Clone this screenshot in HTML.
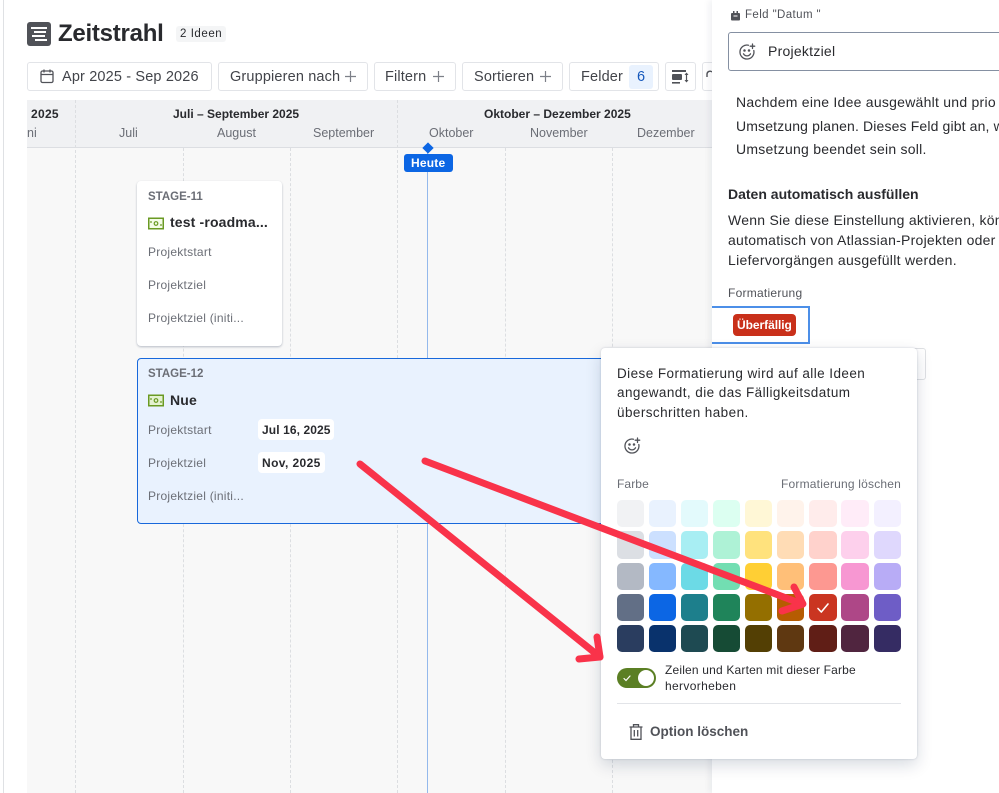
<!DOCTYPE html>
<html lang="de"><head><meta charset="utf-8"><title>Zeitstrahl</title>
<style>
html,body{margin:0;padding:0;background:#fff}
#p{position:relative;width:999px;height:793px;overflow:hidden;background:#fff;font-family:"Liberation Sans","DejaVu Sans",sans-serif;color:#292a2e;filter:blur(.35px)}
#p div,#p span.a,#p svg{position:absolute}
.t{position:absolute;white-space:nowrap;line-height:20px;height:20px;font-size:13px;letter-spacing:.35px}
.btn{position:absolute;top:62px;height:29px;box-sizing:border-box;border:1px solid #e2e4e8;border-radius:3px;background:#fff}
.d{width:0;border-left:1px dashed #dcdee1}
.m{color:#6b6e76;font-size:12.5px;top:123px;letter-spacing:0}
.q{font-weight:bold;font-size:12px;top:104px;color:#292a2e;letter-spacing:0}
.lab{color:#6b6e76;font-size:12px;letter-spacing:.25px}
.key{color:#6b6e76;font-weight:bold;font-size:11.5px;letter-spacing:0}
.title{font-weight:bold;font-size:14px;letter-spacing:.15px}
.pill{background:#fff;border-radius:4px;height:21px}
.bt{font-size:14.5px;color:#42444a;letter-spacing:.15px;top:67px}
.pt{font-size:14px;letter-spacing:.25px;color:#292a2e}
.pp{font-size:13.5px;letter-spacing:.43px;color:#292a2e}
.s{width:27.3px;height:27.3px;border-radius:5px}
</style></head><body><div id="p">
<div style="left:3px;top:0;width:1px;height:793px;background:#dfe1e4"></div>
<div style="left:27px;top:22px;width:24px;height:24px;background:#505258;border-radius:3px"></div>
<div style="left:31px;top:27px;width:16px;height:2px;background:#fff"></div>
<div style="left:34px;top:31px;width:12px;height:2px;background:#fff"></div>
<div style="left:32px;top:35px;width:13px;height:2px;background:#fff"></div>
<div style="left:35px;top:39px;width:12px;height:2px;background:#fff"></div>
<span class="t" style="left:58px;top:24px;font-size:24px;font-weight:bold;letter-spacing:-.25px">Zeitstrahl</span>
<div style="left:176px;top:26px;width:50px;height:16px;background:#f4f5f6;border-radius:3px"></div>
<span class="t" style="left:180px;top:24px;font-size:11.5px;letter-spacing:.55px">2 Ideen</span>

<div class="btn" style="left:27px;width:185px"></div>
<svg style="left:39px;top:68px" width="16" height="16" viewBox="0 0 16 16" fill="none" stroke="#505258" stroke-width="1.3"><rect x="2" y="3" width="12" height="11.5" rx="1.5"/><path d="M2 6.5h12M5 1.5v3M11 1.5v3"/></svg>
<span class="t bt" style="left:62px">Apr 2025 - Sep 2026</span>
<div class="btn" style="left:218px;width:150px"></div>
<span class="t bt" style="left:230px">Gruppieren nach</span>
<svg style="left:344px;top:70px" width="13" height="13" viewBox="0 0 13 13" stroke="#7d8088" stroke-width="1.2"><path d="M6.5 1v11M1 6.5h11"/></svg>
<div class="btn" style="left:374px;width:82px"></div>
<span class="t bt" style="left:385px">Filtern</span>
<svg style="left:432px;top:70px" width="13" height="13" viewBox="0 0 13 13" stroke="#7d8088" stroke-width="1.2"><path d="M6.5 1v11M1 6.5h11"/></svg>
<div class="btn" style="left:462px;width:101px"></div>
<span class="t bt" style="left:474px">Sortieren</span>
<svg style="left:539px;top:70px" width="13" height="13" viewBox="0 0 13 13" stroke="#7d8088" stroke-width="1.2"><path d="M6.5 1v11M1 6.5h11"/></svg>
<div class="btn" style="left:569px;width:90px"></div>
<span class="t bt" style="left:581px">Felder</span>
<div style="left:629px;top:65px;width:24px;height:24px;background:#e9f2fe;border-radius:3px"></div>
<span class="t bt" style="left:637px;color:#1558bc">6</span>
<div class="btn" style="left:665px;width:31px"></div>
<svg style="left:671px;top:69px" width="20" height="16" viewBox="0 0 20 16" fill="#505258"><rect x="1" y="1" width="14" height="2"/><rect x="1" y="5" width="10" height="6" rx="1"/><rect x="1" y="13" width="8" height="1.6"/><path d="M15.5 4v9" stroke="#505258" stroke-width="1.2"/><path d="M13.5 6l2-2.500 2 2.500zM13.500 11l2 2.500 2-2.500z"/></svg>
<div class="btn" style="left:702px;width:30px"></div>
<svg style="left:706px;top:70px" width="8" height="10" viewBox="0 0 8 10" fill="none" stroke="#505258" stroke-width="1.4"><path d="M1 7V4a3 3 0 0 1 5-2"/></svg>

<div style="left:27px;top:100px;width:685px;height:48px;background:#f0f1f3;border-bottom:1px solid #dcdee2;box-sizing:border-box"></div>
<div style="left:27px;top:148px;width:685px;height:645px;background:#f8f8f8"></div>
<div class="d" style="left:75px;top:100px;height:693px"></div>
<div class="d" style="left:397px;top:100px;height:693px"></div>
<div class="d" style="left:183px;top:148px;height:645px"></div>
<div class="d" style="left:290px;top:148px;height:645px"></div>
<div class="d" style="left:505px;top:148px;height:645px"></div>
<div class="d" style="left:612px;top:148px;height:645px"></div>

<span class="t q" style="left:31px;letter-spacing:.3px">2025</span>
<span class="t q" style="left:173px">Juli – September 2025</span>
<span class="t q" style="left:484px">Oktober – Dezember 2025</span>
<span class="t m" style="left:27px">ni</span>
<span class="t m" style="left:119px">Juli</span>
<span class="t m" style="left:217px">August</span>
<span class="t m" style="left:313px">September</span>
<span class="t m" style="left:429px">Oktober</span>
<span class="t m" style="left:530px">November</span>
<span class="t m" style="left:637px">Dezember</span>

<div style="left:427px;top:148px;width:1px;height:645px;background:#94b9ec"></div>
<div style="left:423.500px;top:144px;width:8px;height:8px;background:#0c66e4;transform:rotate(45deg)"></div>
<div style="left:404px;top:154px;width:49px;height:18px;background:#0c66e4;border-radius:3px"></div>
<span class="t" style="left:411px;top:153px;color:#fff;font-weight:bold;font-size:12px;letter-spacing:.2px">Heute</span>

<div style="left:137px;top:181px;width:145px;height:165px;background:#fff;border-radius:4px;box-shadow:0 1px 2px rgba(9,30,66,.28)"></div>
<span class="t key" style="left:148px;top:187px">STAGE-11</span>
<svg style="left:148px;top:217px" width="16" height="13" viewBox="0 0 16 13" fill="none"><rect x=".75" y="1.250" width="14.500" height="10.500" fill="#f4fbe8" stroke="#6a9a23" stroke-width="1.500"/><circle cx="8" cy="6.500" r="1.800" stroke="#6a9a23" stroke-width="1.200"/><path d="M3 4v2M13 7v2" stroke="#6a9a23" stroke-width="1.200"/></svg>
<span class="t title" style="left:170px;top:212px">test -roadma...</span>
<span class="t lab" style="left:148px;top:242px">Projektstart</span>
<span class="t lab" style="left:148px;top:275px">Projektziel</span>
<span class="t lab" style="left:148px;top:308px">Projektziel (initi...</span>

<div style="left:137px;top:358px;width:480px;height:166px;box-sizing:border-box;background:#e9f2fe;border:1.500px solid #1868db;border-radius:4px"></div>
<span class="t key" style="left:148px;top:364px">STAGE-12</span>
<svg style="left:148px;top:394px" width="16" height="13" viewBox="0 0 16 13" fill="none"><rect x=".75" y="1.250" width="14.500" height="10.500" fill="#e4f2d0" stroke="#6a9a23" stroke-width="1.500"/><circle cx="8" cy="6.500" r="1.800" stroke="#6a9a23" stroke-width="1.200"/><path d="M3 4v2M13 7v2" stroke="#6a9a23" stroke-width="1.200"/></svg>
<span class="t title" style="left:170px;top:390px">Nue</span>
<span class="t lab" style="left:148px;top:420px">Projektstart</span>
<span class="t lab" style="left:148px;top:453px">Projektziel</span>
<span class="t lab" style="left:148px;top:486px">Projektziel (initi...</span>
<div class="pill" style="left:258px;top:419px;width:76px"></div>
<span class="t" style="left:262px;top:420px;font-weight:bold;font-size:12px;letter-spacing:.1px">Jul 16, 2025</span>
<div class="pill" style="left:258px;top:452px;width:67px"></div>
<span class="t" style="left:262px;top:453px;font-weight:bold;font-size:12px;letter-spacing:.4px">Nov, 2025</span>

<!-- right panel -->
<div style="left:712px;top:0;width:287px;height:793px;background:#fff;box-shadow:-3px 0 6px rgba(9,30,66,.06);overflow:hidden"></div>
<svg style="left:730px;top:10px" width="11" height="11" viewBox="0 0 11 11" fill="#505258"><rect x="1" y="3" width="9" height="7.500" rx="1"/><rect x="3" y="1" width="1.500" height="3"/><rect x="6.500" y="1" width="1.500" height="3"/><rect x="3.500" y="5.500" width="4" height="1" fill="#fff"/></svg>
<span class="t" style="left:745px;top:5px;font-size:11.500px;color:#505258;letter-spacing:.4px">Feld "Datum "</span>
<div style="left:728px;top:32px;width:290px;height:39px;box-sizing:border-box;border:1px solid #8590a2;border-radius:3px;background:#fff"></div>
<svg style="left:738px;top:43px" width="18" height="18" viewBox="0 0 18 18" fill="none" stroke="#505258" stroke-width="1.300" stroke-linecap="round"><path d="M10.500 2.200A7 7 0 1 0 15.800 7.500"/><path d="M5.500 10.800a4 4 0 0 0 7 0"/><path d="M14.500 1v4.500M12.200 3.200h4.500"/><circle cx="6.500" cy="7.500" r=".6" fill="#505258"/><circle cx="11" cy="7.500" r=".6" fill="#505258"/></svg>
<span class="t pt" style="left:768px;top:41px">Projektziel</span>
<span class="t pt" style="left:736px;top:92px">Nachdem eine Idee ausgewählt und prio</span>
<span class="t pt" style="left:736px;top:116px;letter-spacing:.14px">Umsetzung planen. Dieses Feld gibt an, w</span>
<span class="t pt" style="left:736px;top:139px">Umsetzung beendet sein soll.</span>
<span class="t pt" style="left:728px;top:184px;font-weight:bold;letter-spacing:0">Daten automatisch ausfüllen</span>
<span class="t pt" style="left:728px;top:210px">Wenn Sie diese Einstellung aktivieren, kön</span>
<span class="t pt" style="left:728px;top:230px">automatisch von Atlassian-Projekten oder</span>
<span class="t pt" style="left:728px;top:250px;letter-spacing:.3px">Liefervorgängen ausgefüllt werden.</span>
<span class="t" style="left:728px;top:283px;font-size:12px;color:#505258;letter-spacing:.25px">Formatierung</span>
<div style="left:712px;top:306px;width:98px;height:38px;box-sizing:border-box;border:2px solid #4c8fe8;border-left:none"></div>
<div style="left:733px;top:314px;width:63px;height:22px;background:#c9301a;border-radius:4px"></div>
<span class="t" style="left:737px;top:315px;color:#fff;font-weight:bold;font-size:12px;letter-spacing:-.05px">Überfällig</span>
<div style="left:880px;top:348px;width:46px;height:32px;box-sizing:border-box;border:1px solid #dfe1e4;border-radius:3px;background:#fff"></div>

<!-- popup -->
<div style="left:601px;top:348px;width:316px;height:411px;background:#fff;border-radius:4px;box-shadow:0 6px 16px rgba(9,30,66,.16),0 0 2px rgba(9,30,66,.18)"></div>
<span class="t pp" style="left:617px;top:364px">Diese Formatierung wird auf alle Ideen</span>
<span class="t pp" style="left:617px;top:383px">angewandt, die das Fälligkeitsdatum</span>
<span class="t pp" style="left:617px;top:403px">überschritten haben.</span>
<svg style="left:623px;top:437px" width="18" height="18" viewBox="0 0 18 18" fill="none" stroke="#505258" stroke-width="1.300" stroke-linecap="round"><path d="M10.500 2.200A7 7 0 1 0 15.800 7.500"/><path d="M5.500 10.800a4 4 0 0 0 7 0"/><path d="M14.500 1v4.500M12.200 3.200h4.500"/><circle cx="6.500" cy="7.500" r=".6" fill="#505258"/><circle cx="11" cy="7.500" r=".6" fill="#505258"/></svg>
<span class="t" style="left:617px;top:474px;font-size:12px;color:#6b6e76;letter-spacing:.1px">Farbe</span>
<span class="t" style="left:781px;top:474px;font-size:12px;color:#6b6e76;letter-spacing:.2px">Formatierung löschen</span>

<div class="s" style="left:616.700px;top:500px;background:#f1f2f4"></div><div class="s" style="left:648.800px;top:500px;background:#e9f2fe"></div><div class="s" style="left:680.900px;top:500px;background:#e3fafc"></div><div class="s" style="left:713px;top:500px;background:#dcfff1"></div><div class="s" style="left:745.100px;top:500px;background:#fff7d6"></div><div class="s" style="left:777.200px;top:500px;background:#fff3eb"></div><div class="s" style="left:809.300px;top:500px;background:#ffeceb"></div><div class="s" style="left:841.400px;top:500px;background:#ffecf8"></div><div class="s" style="left:873.500px;top:500px;background:#f3f0ff"></div>
<div class="s" style="left:616.700px;top:531.300px;background:#dcdfe4"></div><div class="s" style="left:648.800px;top:531.300px;background:#cce0ff"></div><div class="s" style="left:680.900px;top:531.300px;background:#a8eef3"></div><div class="s" style="left:713px;top:531.300px;background:#aef2d6"></div><div class="s" style="left:745.100px;top:531.300px;background:#ffe27d"></div><div class="s" style="left:777.200px;top:531.300px;background:#ffdcb5"></div><div class="s" style="left:809.300px;top:531.300px;background:#ffd2cc"></div><div class="s" style="left:841.400px;top:531.300px;background:#fdd0ec"></div><div class="s" style="left:873.500px;top:531.300px;background:#dfd8fd"></div>
<div class="s" style="left:616.700px;top:562.600px;background:#b3b9c4"></div><div class="s" style="left:648.800px;top:562.600px;background:#85b8ff"></div><div class="s" style="left:680.900px;top:562.600px;background:#6cdae6"></div><div class="s" style="left:713px;top:562.600px;background:#72deb2"></div><div class="s" style="left:745.100px;top:562.600px;background:#ffcf34"></div><div class="s" style="left:777.200px;top:562.600px;background:#ffbf78"></div><div class="s" style="left:809.300px;top:562.600px;background:#fd9891"></div><div class="s" style="left:841.400px;top:562.600px;background:#f797d2"></div><div class="s" style="left:873.500px;top:562.600px;background:#b8acf6"></div>
<div class="s" style="left:616.700px;top:593.900px;background:#626f86"></div><div class="s" style="left:648.800px;top:593.900px;background:#0c66e4"></div><div class="s" style="left:680.900px;top:593.900px;background:#1d7f8c"></div><div class="s" style="left:713px;top:593.900px;background:#1f845a"></div><div class="s" style="left:745.100px;top:593.900px;background:#946f00"></div><div class="s" style="left:777.200px;top:593.900px;background:#b65c02"></div><div class="s" style="left:809.300px;top:593.900px;background:#ca3521"></div><div class="s" style="left:841.400px;top:593.900px;background:#ae4787"></div><div class="s" style="left:873.500px;top:593.900px;background:#6e5dc6"></div>
<div class="s" style="left:616.700px;top:625.200px;background:#2a3d5f"></div><div class="s" style="left:648.800px;top:625.200px;background:#09326c"></div><div class="s" style="left:680.900px;top:625.200px;background:#1e4a52"></div><div class="s" style="left:713px;top:625.200px;background:#164b35"></div><div class="s" style="left:745.100px;top:625.200px;background:#533f04"></div><div class="s" style="left:777.200px;top:625.200px;background:#5f3811"></div><div class="s" style="left:809.300px;top:625.200px;background:#601e16"></div><div class="s" style="left:841.400px;top:625.200px;background:#50253f"></div><div class="s" style="left:873.500px;top:625.200px;background:#352c63"></div>
<svg style="left:815px;top:600px" width="16" height="16" viewBox="0 0 16 16" fill="none" stroke="#fff" stroke-width="1.600" stroke-linecap="round" stroke-linejoin="round"><path d="M3 8.500l3.300 3.500L13 4"/></svg>

<div style="left:617px;top:668px;width:39px;height:20px;background:#5b7f24;border-radius:10px"></div>
<div style="left:638px;top:670px;width:16px;height:16px;background:#fff;border-radius:50%"></div>
<svg style="left:622px;top:673px" width="10" height="10" viewBox="0 0 10 10" fill="none" stroke="#fff" stroke-width="1.200" stroke-linecap="round"><path d="M2 5.500l2 2L8 3"/></svg>
<span class="t" style="left:665px;top:660px;font-size:12px;letter-spacing:.18px">Zeilen und Karten mit dieser Farbe</span>
<span class="t" style="left:665px;top:676px;font-size:12px;letter-spacing:.35px">hervorheben</span>
<div style="left:617px;top:703px;width:284px;height:1px;background:#e2e4e8"></div>
<svg style="left:628px;top:723px" width="16" height="18" viewBox="0 0 16 18" fill="none" stroke="#505258" stroke-width="1.300"><path d="M1.500 4h13M5.500 4V1.700h5V4M3 4v12.300h10V4M6.300 7v6.500M9.700 7v6.500"/></svg>
<span class="t" style="left:650px;top:722px;font-size:13.500px;font-weight:bold;color:#505258;letter-spacing:0">Option löschen</span>

<!-- arrows -->
<svg style="left:0;top:0" width="999" height="793" viewBox="0 0 999 793" fill="none" stroke="#f9334a" stroke-width="7" stroke-linecap="round" stroke-linejoin="round"><path d="M360 464L600 657"/><path d="M597 637L600 657 579 659"/><path d="M425 461L802 604"/><path d="M794 587L803 604 782 611"/></svg>
</div></body></html>
